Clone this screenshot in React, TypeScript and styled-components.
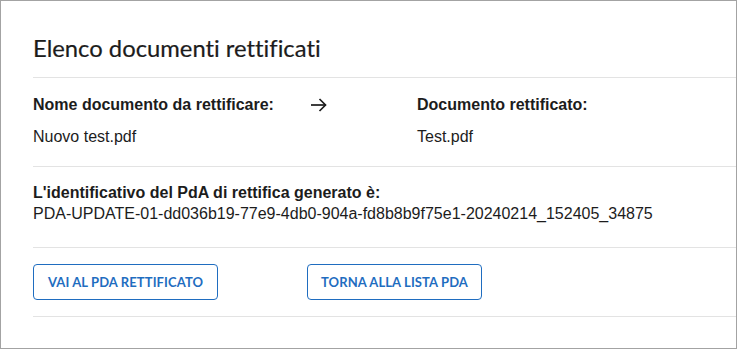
import React from 'react';
import styled, { createGlobalStyle } from 'styled-components';

const GlobalStyle = createGlobalStyle`
  html, body {
    margin: 0;
    padding: 0;
    background: #ffffff;
  }
  * {
    box-sizing: border-box;
  }
`;

// --- Styled Components ---

const Frame = styled.div`
  width: 737px;
  height: 349px;
  border: 1px solid #a3a3a3;
  background: #ffffff;
  padding-left: 32px;
  overflow: hidden;
`;

const Title = styled.h1`
  margin: 0;
  padding: 32px 0 0;
  height: 76px;
  font-family: 'Lato', sans-serif;
  font-size: 23.8px;
  font-weight: 400;
  line-height: 30px;
  color: #1c1c1c;
  font-variant-ligatures: none;
  -webkit-text-stroke: 0.2px #1c1c1c;
`;

const Section = styled.div<{ $height: number; $top: number }>`
  height: ${(p) => p.$height}px;
  padding-top: ${(p) => p.$top}px;
  border-top: 1px solid #e3e3e3;
`;

const CompareGrid = styled.div`
  display: grid;
  grid-template-columns: 277px 107px auto;
  row-gap: 13px;
  align-items: center;
`;

const Label = styled.div`
  font-family: 'Liberation Sans', Arial, sans-serif;
  font-size: 16px;
  font-weight: 700;
  line-height: 19px;
  color: #1c1c1c;
`;

const Value = styled.div`
  font-family: 'Liberation Sans', Arial, sans-serif;
  font-size: 16px;
  font-weight: 400;
  line-height: 19px;
  color: #1c1c1c;
`;

const ArrowWrap = styled.div`
  display: flex;
  align-items: center;
  height: 19px;
`;

const IdBlock = styled.div`
  display: flex;
  flex-direction: column;
  gap: 2px;
`;

const ButtonRow = styled.div`
  display: flex;
  gap: 89px;
`;

const OutlineButton = styled.button<{ $width: number }>`
  width: ${(p) => p.$width}px;
  height: 36px;
  padding: 0;
  background: #ffffff;
  border: 1px solid #1f6dc0;
  border-radius: 4px;
  color: #1f6dc0;
  font-family: 'Lato', sans-serif;
  font-size: 13px;
  font-weight: 700;
  letter-spacing: 0.1px;
  text-transform: uppercase;
  cursor: pointer;
`;

const ArrowRight = () => (
  <svg width="17" height="16" viewBox="0 0 17 16" fill="none">
    <path d="M1 8h14.5" stroke="#1c1c1c" strokeWidth="1.7" />
    <path d="M9.5 2l6 6-6 6" stroke="#1c1c1c" strokeWidth="1.7" />
  </svg>
);

const App: React.FC = () => {
  return (
    <>
      <GlobalStyle />
      <Frame>
        <Title>Elenco documenti rettificati</Title>

        <Section $height={89} $top={17}>
          <CompareGrid>
            <Label>Nome documento da rettificare:</Label>
            <ArrowWrap>
              <ArrowRight />
            </ArrowWrap>
            <Label>Documento rettificato:</Label>
            <Value>Nuovo test.pdf</Value>
            <span />
            <Value>Test.pdf</Value>
          </CompareGrid>
        </Section>

        <Section $height={81} $top={16}>
          <IdBlock>
            <Label>L'identificativo del PdA di rettifica generato è:</Label>
            <Value>PDA-UPDATE-01-dd036b19-77e9-4db0-904a-fd8b8b9f75e1-20240214_152405_34875</Value>
          </IdBlock>
        </Section>

        <Section $height={69} $top={16}>
          <ButtonRow>
            <OutlineButton $width={185}>Vai al PDA rettificato</OutlineButton>
            <OutlineButton $width={175}>Torna alla lista PDA</OutlineButton>
          </ButtonRow>
        </Section>

        <Section $height={32} $top={0} />
      </Frame>
    </>
  );
};

export default App;
